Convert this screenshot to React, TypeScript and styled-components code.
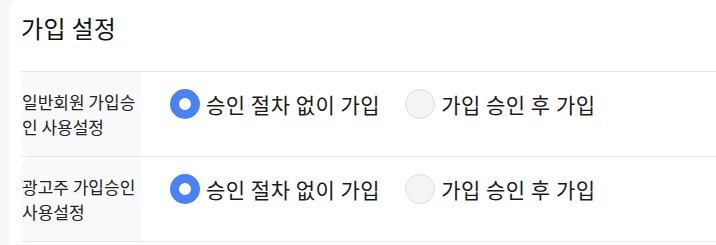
import React, { useState } from "react";
import styled, { createGlobalStyle } from "styled-components";

const GlobalStyle = createGlobalStyle`
  html, body {
    margin: 0;
    padding: 0;
    background: #f6f7f9;
    font-family: "Noto Sans CJK KR", "Noto Sans", sans-serif;
    color: #1f1f1f;
  }
`;

type Option = { value: string; label: string };

const options: Option[] = [
  { value: "auto", label: "승인 절차 없이 가입" },
  { value: "approve", label: "가입 승인 후 가입" },
];

const settings = [
  { id: "member", title: "일반회원 가입승인 사용설정" },
  { id: "advertiser", title: "광고주 가입승인 사용설정" },
];

export default function App() {
  const [values, setValues] = useState<Record<string, string>>({
    member: "auto",
    advertiser: "auto",
  });

  return (
    <>
      <GlobalStyle />
      <Page>
        <Card>
          <Title>가입 설정</Title>
          <Table>
            {settings.map(({ id, title }) => (
              <Row key={id}>
                <LabelCell>{title}</LabelCell>
                <ValueCell>
                  {options.map((opt) => (
                    <RadioLabel key={opt.value}>
                      <HiddenInput
                        type="radio"
                        name={id}
                        checked={values[id] === opt.value}
                        onChange={() =>
                          setValues((prev) => ({ ...prev, [id]: opt.value }))
                        }
                      />
                      <RadioCircle $checked={values[id] === opt.value} />
                      <RadioText>{opt.label}</RadioText>
                    </RadioLabel>
                  ))}
                </ValueCell>
              </Row>
            ))}
          </Table>
        </Card>
      </Page>
    </>
  );
}

const Page = styled.div`
  min-height: 245px;
  padding-left: 9px;
  background: #f6f7f9;
`;

const Card = styled.div`
  min-height: 245px;
  padding: 12px 0 0 12px;
  background: #fff;
  border-radius: 10px 0 0 0;
`;

const Title = styled.h2`
  margin: 0;
  height: 59px;
  font-size: 24px;
  font-weight: 400;
  line-height: 32px;
  letter-spacing: 0.3px;
  color: #111;
`;

const Table = styled.div`
  border-top: 1px solid #e6e7e9;
`;

const Row = styled.div`
  display: flex;
  height: 84px;
  border-bottom: 1px solid #e6e7e9;
`;

const LabelCell = styled.div`
  display: flex;
  align-items: center;
  box-sizing: border-box;
  width: 120px;
  flex-shrink: 0;
  padding: 0 4px 0 1px;
  background: #f8f9fb;
  border-radius: 10px 0 0 10px;
  font-size: 17px;
  line-height: 25px;
  color: #222;
`;

const ValueCell = styled.div`
  display: flex;
  align-items: flex-start;
  gap: 25px;
  padding: 17px 0 0 29px;
`;

const RadioLabel = styled.label`
  display: flex;
  align-items: center;
  gap: 6px;
  cursor: pointer;
`;

const HiddenInput = styled.input`
  position: absolute;
  opacity: 0;
  pointer-events: none;
`;

const RadioCircle = styled.span<{ $checked: boolean }>`
  box-sizing: border-box;
  width: 30px;
  height: 30px;
  border-radius: 50%;
  background: ${(p) => (p.$checked ? "#fff" : "#f5f5f5")};
  border: ${(p) => (p.$checked ? "9px solid #4a82f6" : "1px solid #dcdcdc")};
`;

const RadioText = styled.span`
  font-size: 21px;
  line-height: 30px;
  letter-spacing: 0.5px;
  color: #1a1a1a;
`;
